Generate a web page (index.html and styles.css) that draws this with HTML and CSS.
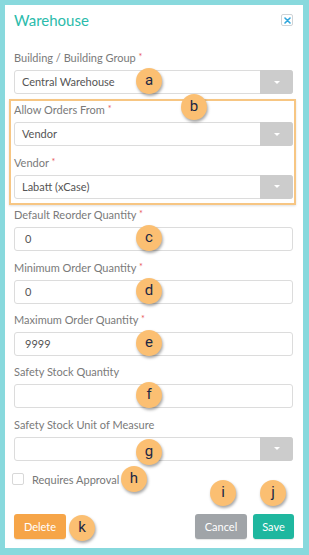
FILE: index.html
```html
<!DOCTYPE html>
<html lang="en">
<head>
  <meta charset="UTF-8" />
  <title>Warehouse</title>
  <link rel="stylesheet" href="styles.css">
</head>
<body>
  <div class="modal">
    <div class="modal-head">
      <h2 class="modal-title">Warehouse</h2>
      <span class="close-btn">
        <svg width="7" height="7" viewBox="0 0 7 7"><path d="M1 1L6 6M6 1L1 6" stroke="#2fa6dc" stroke-width="1.6" stroke-linecap="round"/></svg>
      </span>
    </div>

    <div class="form">
      <div class="field">
        <label>Building / Building Group <span class="req">*</span></label>
        <div class="control">
          <div class="select">
            <span class="select-text">Central Warehouse</span>
            <span class="select-btn"><svg width="6" height="3" viewBox="0 0 6 3"><path d="M0 0H6L3 3Z" fill="#fff"/></svg></span>
          </div>
          <span class="badge badge-field">a</span>
        </div>
      </div>

      <div class="highlight">
        <span class="badge badge-b">b</span>
        <div class="field">
          <label>Allow Orders From <span class="req">*</span></label>
          <div class="control">
            <div class="select">
              <span class="select-text">Vendor</span>
              <span class="select-btn"><svg width="6" height="3" viewBox="0 0 6 3"><path d="M0 0H6L3 3Z" fill="#fff"/></svg></span>
            </div>
          </div>
        </div>
        <div class="field">
          <label>Vendor <span class="req">*</span></label>
          <div class="control">
            <div class="select">
              <span class="select-text">Labatt (xCase)</span>
              <span class="select-btn"><svg width="6" height="3" viewBox="0 0 6 3"><path d="M0 0H6L3 3Z" fill="#fff"/></svg></span>
            </div>
          </div>
        </div>
      </div>

      <div class="field">
        <label>Default Reorder Quantity <span class="req">*</span></label>
        <div class="control">
          <div class="input">0</div>
          <span class="badge badge-field">c</span>
        </div>
      </div>

      <div class="field">
        <label>Minimum Order Quantity <span class="req">*</span></label>
        <div class="control">
          <div class="input">0</div>
          <span class="badge badge-field">d</span>
        </div>
      </div>

      <div class="field">
        <label>Maximum Order Quantity <span class="req">*</span></label>
        <div class="control">
          <div class="input">9999</div>
          <span class="badge badge-field">e</span>
        </div>
      </div>

      <div class="field">
        <label>Safety Stock Quantity</label>
        <div class="control">
          <div class="input"></div>
          <span class="badge badge-field">f</span>
        </div>
      </div>

      <div class="field">
        <label>Safety Stock Unit of Measure</label>
        <div class="control">
          <div class="select">
            <span class="select-text"></span>
            <span class="select-btn"><svg width="6" height="3" viewBox="0 0 6 3"><path d="M0 0H6L3 3Z" fill="#fff"/></svg></span>
          </div>
          <span class="badge badge-field badge-low">g</span>
        </div>
      </div>
    </div>

    <div class="check-row">
      <span class="checkbox"></span>
      <span class="check-label">Requires Approval</span>
      <span class="badge badge-h">h</span>
    </div>

    <div class="actions">
      <button class="btn btn-delete">Delete</button>
      <div class="actions-right">
        <button class="btn btn-cancel">Cancel</button>
        <button class="btn btn-save">Save</button>
      </div>
      <span class="badge badge-i">i</span>
      <span class="badge badge-j">j</span>
      <span class="badge badge-k">k</span>
    </div>
  </div>
</body>
</html>
```

FILE: styles.css
```css
body {
  margin: 0;
  background: #88d9dd;
  font-family: Lato, 'Open Sans', sans-serif;
  color: #666;
}
.modal {
  margin: 5px 6px 7px 5px;
  height: 543px;
  box-sizing: border-box;
  background: #ffffff;
  padding: 5px 10px 9px 9px;
  display: flex;
  flex-direction: column;
}
.modal-head {
  display: flex;
  justify-content: space-between;
  align-items: flex-start;
  height: 20px;
}
.modal-title {
  margin: 0;
  font-size: 15px;
  line-height: 20px;
  font-weight: normal;
  color: #2bbbab;
}
.close-btn {
  width: 10px;
  height: 10px;
  margin-top: 4px;
  border: 1px solid #cfd3d6;
  border-radius: 2px;
  display: flex;
  align-items: center;
  justify-content: center;
}
.form {
  margin-top: 21px;
  display: flex;
  flex-direction: column;
  gap: 9.4px;
}
.field {
  display: flex;
  flex-direction: column;
}
.field label {
  display: block;
  height: 14px;
  font-size: 11px;
  line-height: 14px;
  color: #7a7a7a;
  margin-bottom: 5px;
  white-space: nowrap;
}
.req {
  color: #e8575a;
  font-size: 9px;
  line-height: 0;
  vertical-align: 2px;
}
.control {
  position: relative;
}
.select, .input {
  height: 24px;
  box-sizing: border-box;
  border: 1px solid #dcdcdc;
  border-radius: 3px;
  font-size: 11px;
  color: #555;
  background: #fff;
}
.select {
  display: flex;
  align-items: stretch;
}
.select-text {
  flex: 1;
  padding-left: 7px;
  line-height: 22px;
}
.select-btn {
  width: 33px;
  margin: -1px -1px -1px 0;
  background: #cccccc;
  border-radius: 0 3px 3px 0;
  display: flex;
  align-items: center;
  justify-content: center;
}
.input {
  padding-left: 10px;
  line-height: 22px;
}
.highlight {
  position: relative;
  display: flex;
  flex-direction: column;
  gap: 9.4px;
}
.highlight::before {
  content: '';
  position: absolute;
  top: -4px;
  left: -5px;
  right: -3px;
  bottom: -6px;
  border: 2px solid #f7c683;
  box-shadow: 0 1px 2px rgba(0,0,0,0.12);
  pointer-events: none;
}
.badge {
  position: absolute;
  width: 26px;
  height: 26px;
  border-radius: 50%;
  background: #fbbf72;
  box-shadow: 1px 2px 3px rgba(0,0,0,0.35);
  color: #1a2744;
  font-family: Roboto, 'Liberation Sans', sans-serif;
  font-size: 15px;
  line-height: 25px;
  text-align: center;
  z-index: 2;
}
.badge-field {
  left: 122px;
  top: -2px;
}
.badge-low {
  top: 2px;
}
.badge-b {
  left: 167px;
  top: -9px;
}
.check-row {
  position: relative;
  margin-top: 11.5px;
  display: flex;
  align-items: center;
  height: 14px;
}
.checkbox {
  width: 10px;
  height: 10px;
  margin-left: -2px;
  border: 1px solid #d8d8d8;
  border-radius: 2px;
}
.check-label {
  margin-left: 8px;
  font-size: 11px;
  color: #777;
}
.badge-h {
  left: 107px;
  top: -6px;
}
.actions {
  position: relative;
  margin-top: 27.5px;
  display: flex;
  justify-content: space-between;
}
.actions-right {
  display: flex;
  gap: 6px;
  margin-right: -1px;
}
.btn {
  height: 25px;
  border: none;
  border-radius: 3px;
  color: #fff;
  font-family: Lato, sans-serif;
  font-size: 11px;
  padding: 0;
  box-shadow: 0 1px 1px rgba(0,0,0,0.1);
}
.btn-delete {
  width: 52px;
  background: #f6a548;
}
.btn-cancel {
  width: 52px;
  background: #a0a4a8;
}
.btn-save {
  width: 41px;
  background: #1fb79f;
}
.badge-i {
  left: 196px;
  top: -34px;
}
.badge-j {
  left: 246px;
  top: -34px;
}
.badge-k {
  left: 55px;
  top: 1px;
}
```
